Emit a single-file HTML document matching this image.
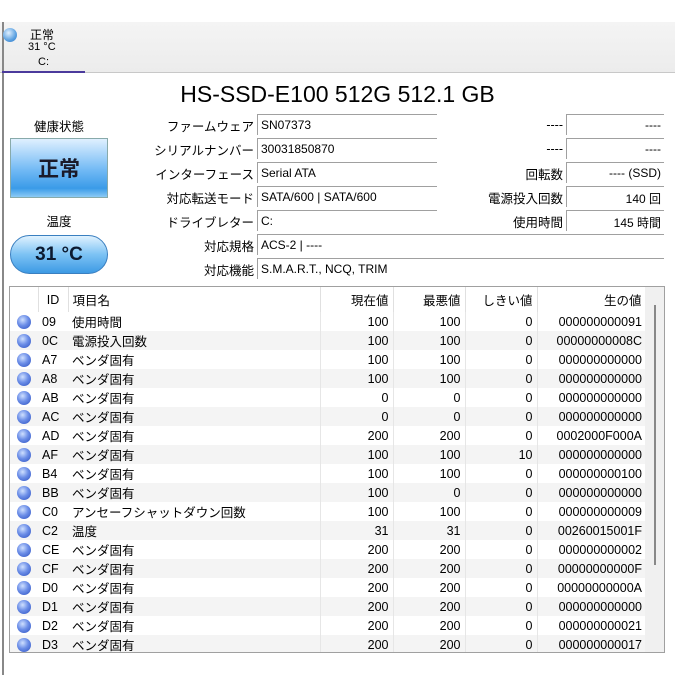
<!DOCTYPE html>
<html><head><meta charset="utf-8"><style>
*{margin:0;padding:0;box-sizing:border-box}
body{width:675px;height:675px;background:#fff;position:relative;overflow:hidden;font-family:"Liberation Sans","Noto Sans CJK JP",sans-serif;font-size:12px;color:#000}
.a{position:absolute}
.lbl{position:absolute;text-align:right;font-size:12.5px;white-space:nowrap}
.fld{position:absolute;height:21px;border-top:1px solid #a0a0a0;border-left:1px solid #a0a0a0;padding:3px 3px 0;font-size:12px;white-space:nowrap}
table{border-collapse:collapse;font-size:12.5px}
td{height:19px;padding:0 4px;white-space:nowrap}
tr:nth-child(odd) td{background:#f4f4f4}
tr:first-child th{background:#fff}
.ic{width:28px;text-align:center}
.dot{display:inline-block;width:14px;height:14px;border-radius:50%;background:radial-gradient(circle at 40% 35%,#cfe0ff 0,#6d8fe8 45%,#2a4fc0 100%);vertical-align:middle}
.r{text-align:right}
th{font-weight:normal;height:25px;padding:0 4px;border-right:1px solid #e0e0e0;white-space:nowrap}
td.b{border-right:1px solid #e6e6e6}
</style></head><body>
<div class="a" style="left:0;top:22px;width:675px;height:51px;background:linear-gradient(#f4f4f4,#ececec);border-bottom:1px solid #c8c8c8"></div>
<div class="a" style="left:2px;top:22px;width:2px;height:653px;background:#888"></div>
<div class="a" style="left:2px;top:71px;width:83px;height:2px;background:#4b3a9c"></div>
<div class="a" style="left:3px;top:28px;width:14px;height:14px;border-radius:50%;background:radial-gradient(circle at 40% 35%,#e0f0ff,#5aa0e0 60%,#2f78c8)"></div>
<div class="a" style="left:30px;top:26px;font-size:12px">正常</div>
<div class="a" style="left:28px;top:41px;font-size:11px">31 °C</div>
<div class="a" style="left:38px;top:56px;font-size:11px">C:</div>
<div class="a" style="left:0;top:81px;width:675px;text-align:center;font-size:23px">HS-SSD-E100 512G 512.1 GB</div>
<div class="a" style="left:10px;top:116px;width:98px;text-align:center;font-size:12.5px">健康状態</div>
<div class="a" style="left:10px;top:138px;width:98px;height:60px;border:1px solid #8aa;background:linear-gradient(#dff0ff,#6fb8f4 55%,#3a9be8 85%,#8ccaf5);text-align:center;font-size:21px;font-weight:bold;line-height:58px;color:#1a1a2a;font-family:'Noto Sans CJK JP',sans-serif">正常</div>
<div class="a" style="left:10px;top:211px;width:98px;text-align:center;font-size:12.5px">温度</div>
<div class="a" style="left:10px;top:235px;width:98px;height:39px;border:1px solid #3a7fc0;border-radius:20px;background:linear-gradient(#e0f2ff,#7cc2f4 50%,#3d9ae4);text-align:center;font-size:19px;font-weight:bold;line-height:38px;color:#0c1a30">31 °C</div>

<div class="lbl" style="right:421px;top:116px">ファームウェア</div>
<div class="lbl" style="right:421px;top:140px">シリアルナンバー</div>
<div class="lbl" style="right:421px;top:164px">インターフェース</div>
<div class="lbl" style="right:421px;top:188px">対応転送モード</div>
<div class="lbl" style="right:421px;top:212px">ドライブレター</div>
<div class="lbl" style="right:421px;top:236px">対応規格</div>
<div class="lbl" style="right:421px;top:260px">対応機能</div>
<div class="fld" style="left:257px;top:114px;width:180px">SN07373</div>
<div class="fld" style="left:257px;top:138px;width:180px">30031850870</div>
<div class="fld" style="left:257px;top:162px;width:180px">Serial ATA</div>
<div class="fld" style="left:257px;top:186px;width:180px">SATA/600 | SATA/600</div>
<div class="fld" style="left:257px;top:210px;width:180px">C:</div>
<div class="fld" style="left:257px;top:234px;width:407px">ACS-2 | ----</div>
<div class="fld" style="left:257px;top:258px;width:407px">S.M.A.R.T., NCQ, TRIM</div>

<div class="lbl" style="right:112px;top:118px">----</div>
<div class="lbl" style="right:112px;top:142px">----</div>
<div class="lbl" style="right:112px;top:164px">回転数</div>
<div class="lbl" style="right:112px;top:188px">電源投入回数</div>
<div class="lbl" style="right:112px;top:212px">使用時間</div>
<div class="fld" style="left:566px;top:114px;width:98px;text-align:right">----</div>
<div class="fld" style="left:566px;top:138px;width:98px;text-align:right">----</div>
<div class="fld" style="left:566px;top:162px;width:98px;text-align:right">---- (SSD)</div>
<div class="fld" style="left:566px;top:186px;width:98px;text-align:right">140 回</div>
<div class="fld" style="left:566px;top:210px;width:98px;text-align:right">145 時間</div>

<div class="a" style="left:9px;top:286px;width:656px;height:367px;border:1px solid #a0a0a0;overflow:hidden">
<div class="a" style="right:0;top:0;width:19px;height:367px;background:#f0f0f0"></div>
<div class="a" style="right:8px;top:18px;width:2px;height:260px;background:#888"></div>
<table style="width:636px;table-layout:fixed">
<colgroup><col style="width:28px"><col style="width:30px"><col style="width:252px"><col style="width:73px"><col style="width:72px"><col style="width:72px"><col style="width:109px"></colgroup>
<tr><th></th><th>ID</th><th style="text-align:left">項目名</th><th class="r">現在値</th><th class="r">最悪値</th><th class="r">しきい値</th><th class="r">生の値</th></tr>
<tr><td class="ic"><span class="dot"></span></td><td>09</td><td class="b">使用時間</td><td class="r b">100</td><td class="r b">100</td><td class="r b">0</td><td class="r">000000000091</td></tr>
<tr><td class="ic"><span class="dot"></span></td><td>0C</td><td class="b">電源投入回数</td><td class="r b">100</td><td class="r b">100</td><td class="r b">0</td><td class="r">00000000008C</td></tr>
<tr><td class="ic"><span class="dot"></span></td><td>A7</td><td class="b">ベンダ固有</td><td class="r b">100</td><td class="r b">100</td><td class="r b">0</td><td class="r">000000000000</td></tr>
<tr><td class="ic"><span class="dot"></span></td><td>A8</td><td class="b">ベンダ固有</td><td class="r b">100</td><td class="r b">100</td><td class="r b">0</td><td class="r">000000000000</td></tr>
<tr><td class="ic"><span class="dot"></span></td><td>AB</td><td class="b">ベンダ固有</td><td class="r b">0</td><td class="r b">0</td><td class="r b">0</td><td class="r">000000000000</td></tr>
<tr><td class="ic"><span class="dot"></span></td><td>AC</td><td class="b">ベンダ固有</td><td class="r b">0</td><td class="r b">0</td><td class="r b">0</td><td class="r">000000000000</td></tr>
<tr><td class="ic"><span class="dot"></span></td><td>AD</td><td class="b">ベンダ固有</td><td class="r b">200</td><td class="r b">200</td><td class="r b">0</td><td class="r">0002000F000A</td></tr>
<tr><td class="ic"><span class="dot"></span></td><td>AF</td><td class="b">ベンダ固有</td><td class="r b">100</td><td class="r b">100</td><td class="r b">10</td><td class="r">000000000000</td></tr>
<tr><td class="ic"><span class="dot"></span></td><td>B4</td><td class="b">ベンダ固有</td><td class="r b">100</td><td class="r b">100</td><td class="r b">0</td><td class="r">000000000100</td></tr>
<tr><td class="ic"><span class="dot"></span></td><td>BB</td><td class="b">ベンダ固有</td><td class="r b">100</td><td class="r b">0</td><td class="r b">0</td><td class="r">000000000000</td></tr>
<tr><td class="ic"><span class="dot"></span></td><td>C0</td><td class="b">アンセーフシャットダウン回数</td><td class="r b">100</td><td class="r b">100</td><td class="r b">0</td><td class="r">000000000009</td></tr>
<tr><td class="ic"><span class="dot"></span></td><td>C2</td><td class="b">温度</td><td class="r b">31</td><td class="r b">31</td><td class="r b">0</td><td class="r">00260015001F</td></tr>
<tr><td class="ic"><span class="dot"></span></td><td>CE</td><td class="b">ベンダ固有</td><td class="r b">200</td><td class="r b">200</td><td class="r b">0</td><td class="r">000000000002</td></tr>
<tr><td class="ic"><span class="dot"></span></td><td>CF</td><td class="b">ベンダ固有</td><td class="r b">200</td><td class="r b">200</td><td class="r b">0</td><td class="r">00000000000F</td></tr>
<tr><td class="ic"><span class="dot"></span></td><td>D0</td><td class="b">ベンダ固有</td><td class="r b">200</td><td class="r b">200</td><td class="r b">0</td><td class="r">00000000000A</td></tr>
<tr><td class="ic"><span class="dot"></span></td><td>D1</td><td class="b">ベンダ固有</td><td class="r b">200</td><td class="r b">200</td><td class="r b">0</td><td class="r">000000000000</td></tr>
<tr><td class="ic"><span class="dot"></span></td><td>D2</td><td class="b">ベンダ固有</td><td class="r b">200</td><td class="r b">200</td><td class="r b">0</td><td class="r">000000000021</td></tr>
<tr><td class="ic"><span class="dot"></span></td><td>D3</td><td class="b">ベンダ固有</td><td class="r b">200</td><td class="r b">200</td><td class="r b">0</td><td class="r">000000000017</td></tr>
</table>
</div>
</body></html>
